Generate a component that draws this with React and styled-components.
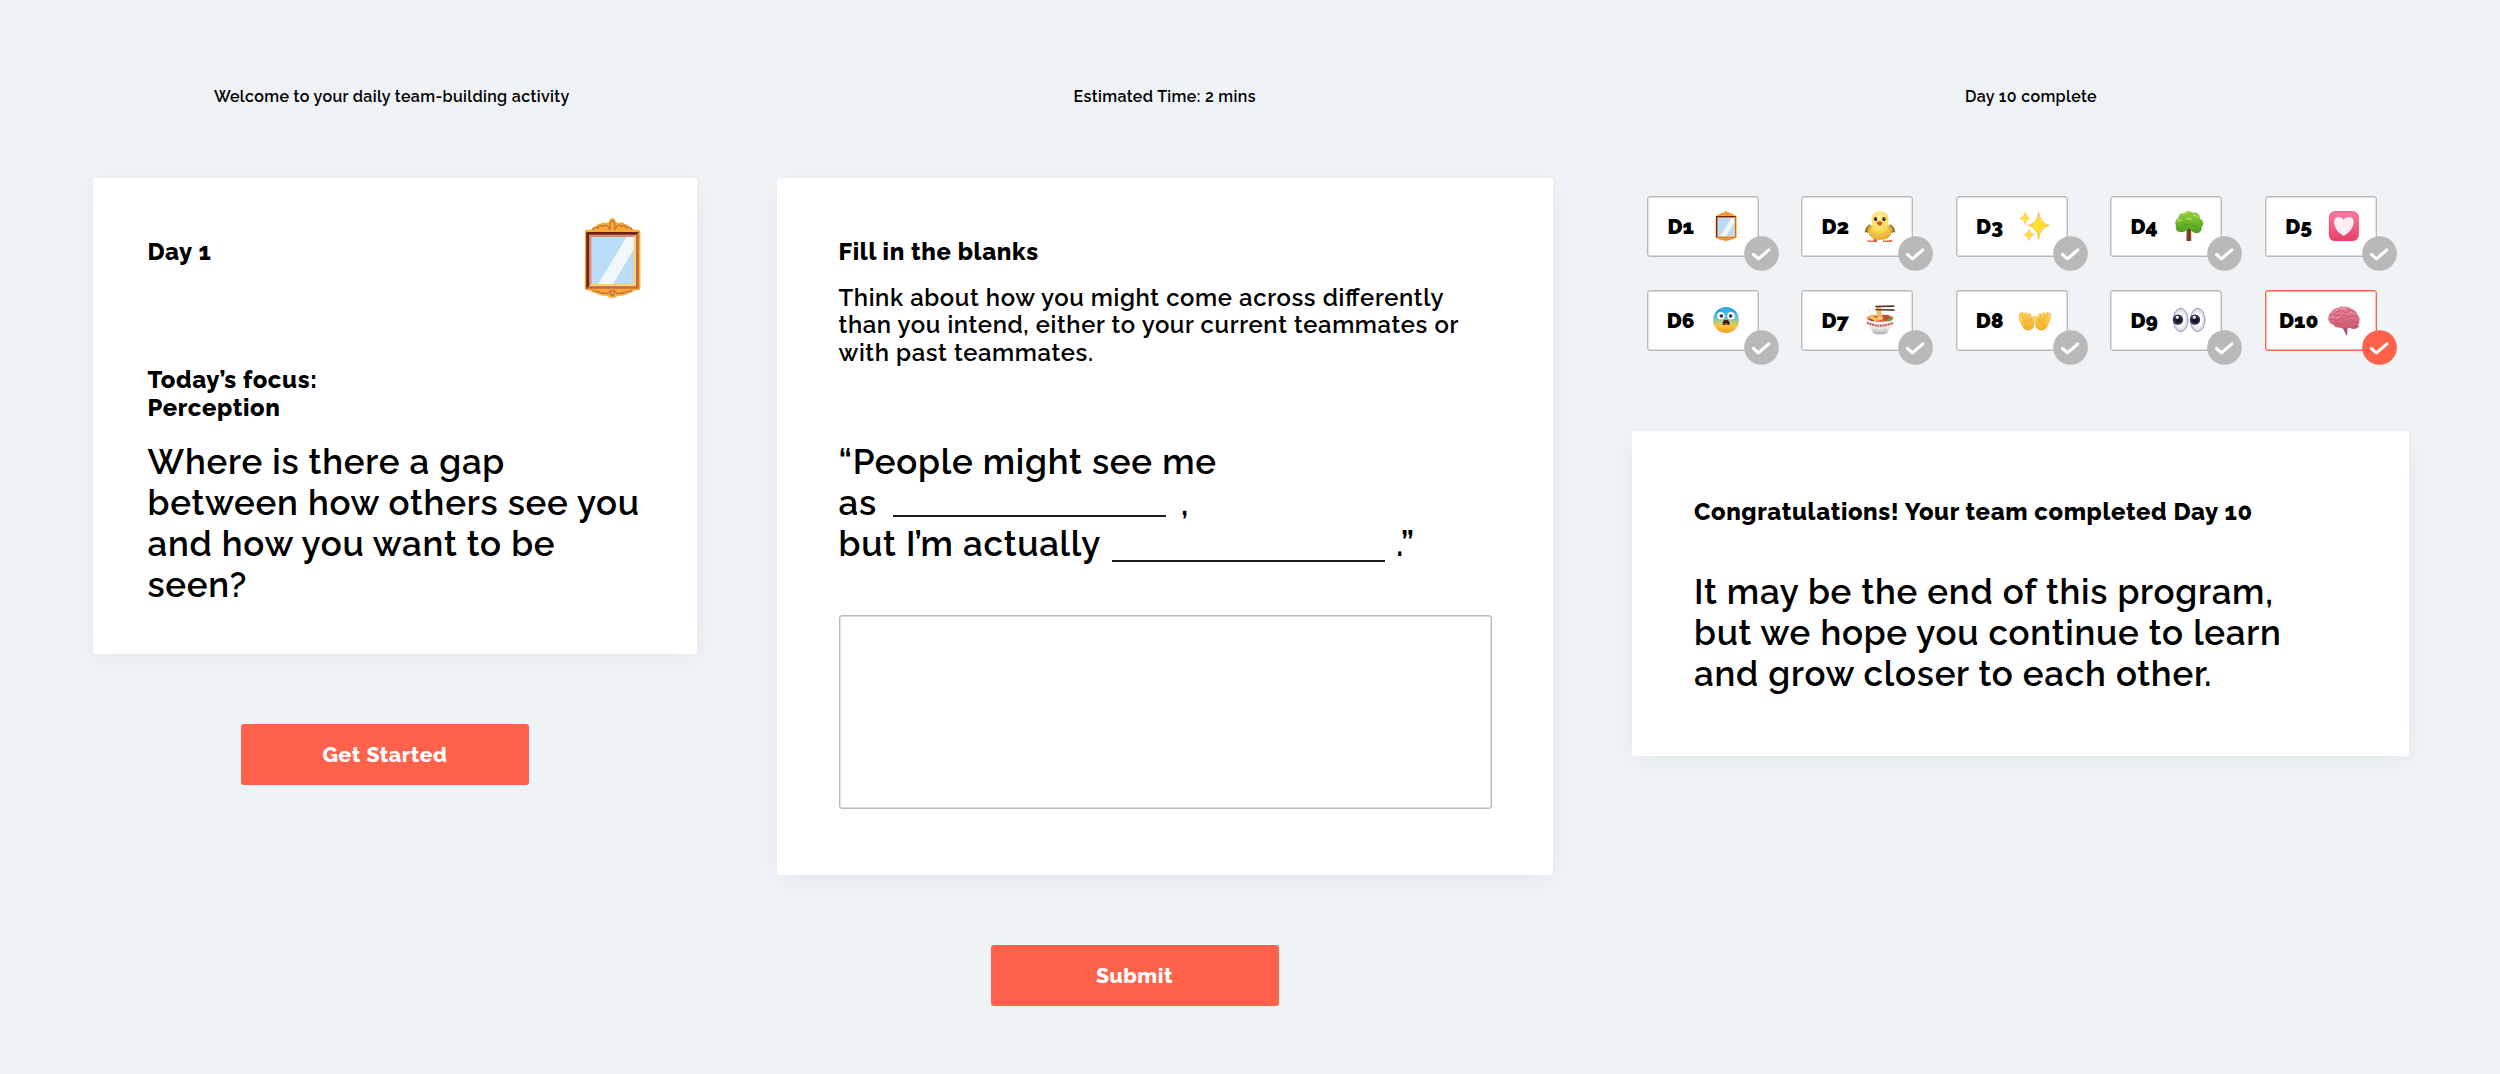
import React from 'react';
import styled, { createGlobalStyle } from 'styled-components';

const CORAL = '#ff614b';
const GREY = '#b9b9b9';

const GlobalStyle = createGlobalStyle`
  * { box-sizing: border-box; }
  body {
    margin: 0;
    background: #eff3f6;
    color: #000;
    font-family: Raleway, Lato, sans-serif;
    font-feature-settings: "liga" 1;
    font-weight: 600;
  }
  h1, h2, p { margin: 0; }
`;

const Board = styled.main`
  display: flex;
  align-items: flex-start;
  width: 2500px;
  height: 1074px;
  padding: 87px 91px 0 92.5px;
  overflow: hidden;
`;

const Column = styled.section`
  display: flex;
  flex-direction: column;
  width: ${p => p.$width}px;
  margin-right: ${p => p.$gap || 0}px;
`;

const Caption = styled.p`
  height: 19px;
  margin-bottom: 72px;
  padding-left: ${p => p.$shift || 0}px;
  padding-right: ${p => p.$pull || 0}px;
  font-size: 16px;
  line-height: 19px;
  letter-spacing: 0.36px;
  text-align: center;
`;

const Card = styled.article`
  display: flex;
  flex-direction: column;
  height: ${p => p.$height}px;
  padding: ${p => p.$pad};
  background: #fff;
  border-radius: 3px;
  box-shadow: 0 6px 26px rgba(20, 40, 50, 0.05);
`;

const CardTop = styled.header`
  display: flex;
  justify-content: space-between;
  height: 149px;
  padding-right: 55px;
`;

const Heading = styled.h2`
  font-size: 23.85px;
  line-height: 28px;
  font-weight: 800;
  letter-spacing: 0.63px;
  padding-top: ${p => p.$top || 0}px;
`;

const Body = styled.p`
  font-size: 23.85px;
  line-height: 27.9px;
  letter-spacing: 0.63px;
  margin-top: 18.5px;
`;

const Statement = styled.p`
  font-size: 34.9px;
  line-height: 41px;
  letter-spacing: 0.73px;
  margin-top: ${p => p.$top}px;
`;

const Blank = styled.span`
  display: inline-block;
  width: 273px;
  height: 2px;
  background: #1c1c1c;
  margin: 0 ${p => p.$after}px 0 ${p => p.$before}px;
  vertical-align: ${p => p.$drop}px;
`;

const Answer = styled.textarea`
  display: block;
  width: 653px;
  height: 194px;
  margin-top: 51px;
  border: 1px solid ${GREY};
  border-radius: 3px;
  box-shadow: inset 0 0 0 0.4px ${GREY};
  background: #fff;
  resize: none;
  outline: none;
`;

const Button = styled.button`
  width: 288px;
  height: 61px;
  margin: 70px 0 0 ${p => p.$left}px;
  padding: 0;
  border: 0;
  border-radius: 3px;
  background: ${CORAL};
  color: #fff;
  font-family: inherit;
  font-size: 21.2px;
  font-weight: 800;
  letter-spacing: 0.55px;
`;

const Days = styled.div`
  display: grid;
  grid-template-columns: repeat(5, 112px);
  column-gap: 42.5px;
  row-gap: 33px;
  padding: 17.5px 0 0 14.7px;
  height: 253px;
  align-content: start;
`;

const Day = styled.div`
  position: relative;
  display: flex;
  align-items: center;
  width: 112px;
  height: 61px;
  padding-left: 5px;
  background: #fff;
  border: 1px solid ${p => (p.$active ? CORAL : GREY)};
  border-radius: 3px;
  box-shadow: inset 0 0 0 0.4px ${p => (p.$active ? CORAL : GREY)};
`;

const DayLabel = styled.span`
  width: 56px;
  font-size: 21px;
  font-weight: 900;
  text-align: center;
`;

const Badge = styled.svg`
  position: absolute;
  left: 96.2px;
  top: 39.2px;
  width: 35px;
  height: 35px;
`;

const Glyph = styled.svg`
  flex: none;
  width: ${p => p.$w || 34}px;
  height: ${p => p.$h || 34}px;
`;

function MirrorArt() {
  return (
    <>
      <path d="M46 62 Q46 58 54 58 L64 58 Q68 50 78 50 Q80 41 92 40 Q100 34 110 38 Q116 37 118 34 Q120 23 128 23 Q136 23 138 34 Q141 38 148 37 Q158 34 164 40 Q176 41 178 50 Q188 50 192 58 L205 58 Q212 58 212 64 L212 232 Q212 240 205 240 L192 241 Q186 248 178 247 Q174 254 164 253 Q154 258 144 256 Q138 263 128 263 Q118 263 112 256 Q102 258 92 253 Q82 254 78 247 Q68 248 64 241 L54 240 Q45 240 45 232 Z" fill="#fbab2f" />
      <path d="M70 57 Q76 47 86 53 Q90 42 101 48 Q111 38 119 55 M186 57 Q180 47 170 53 Q166 42 155 48 Q145 38 137 55 M122 57 Q118 34 128 31 Q138 34 134 57 M70 240 Q78 247 86 242 Q92 252 102 247 Q112 254 119 244 M186 240 Q178 247 170 242 Q164 252 154 247 Q144 254 137 244 M122 242 Q128 239 134 242 L132 254 L124 254 Z" fill="none" stroke="#c0714a" strokeWidth="4" strokeLinecap="round" />
      <path d="M50 65 H207 V235 H50 Z" fill="#bd6a48" />
      <path d="M50 65 H207 L199 73 H58 V226 L50 235 Z" fill="#6b2019" />
      <path d="M58 73 H199 V226 H58 Z" fill="#d98a6c" />
      <path d="M199 73 V228 H58 L65 220 H191 V80 Z" fill="#ffd166" />
      <path d="M65 80 H192 V221 H65 Z" fill="#bbdcf6" />
      <path d="M171 80 H192 V118 L130 221 H85 Z" fill="#f2f7fb" />
    </>
  );
}

function ChickArt() {
  return (
    <>
      <path d="M734 176 L731 182 L715 181 L714 185 L744 186 L743 176 M761 176 L764 182 L789 180 L788 185 L761 186 Z" fill="#ee5b3a" />
      <path d="M723 132 Q708 139 706 158 L712 155 L714 160 L724 152 Z M781 132 Q796 139 798 158 L792 155 L790 160 L780 152 Z" fill="#8d6a2a" />
      <path d="M752 93 Q776 94 778 118 Q777 127 774 132 Q788 140 788 154 Q784 179 752 180 Q720 179 716 154 Q716 140 730 132 Q726 127 726 118 Q728 94 752 93 Z" fill="url(#chick)" />
      <path d="M722 137 Q713 143 713 153 Q724 154 730 139 Z M782 137 Q791 143 791 153 Q780 154 774 139 Z" fill="#e9ae2f" />
      <ellipse cx="739" cy="117" rx="5" ry="6" fill="#1d1c35" /><ellipse cx="764" cy="117" rx="5" ry="6" fill="#1d1c35" />
      <circle cx="740.500" cy="115" r="1.500" fill="#fff" /><circle cx="765.500" cy="115" r="1.500" fill="#fff" />
      <path d="M742 127 Q751 119 760 127 Q756 136 751 137 Q745 135 742 127 Z" fill="#f2762c" />
      <path d="M742 127 Q751 130 760 127 Q756 136 751 137 Q745 135 742 127 Z" fill="#c94a20" />
      <defs><radialGradient id="chick" cx=".45" cy=".25" r=".8"><stop offset="0" stopColor="#fff0a0" /><stop offset=".55" stopColor="#fbd954" /><stop offset="1" stopColor="#e2a029" /></radialGradient></defs>
    </>
  );
}

function SparklesArt() {
  return (
    <g fill="url(#spark)" stroke="#f5b64e" strokeWidth="1.500" strokeLinejoin="round">
      <path d="M297 95 Q301 130 330 136 Q301 144 297 179 Q293 144 264 136 Q293 130 297 95 Z" />
      <path d="M257 95 Q259 112 272 115 Q259 118 257 134 Q254 118 240 115 Q254 112 257 95 Z" />
      <path d="M268 147 Q270 161 284 164 Q270 167 268 182 Q265 167 253 164 Q265 161 268 147 Z" />
      <defs><radialGradient id="spark"><stop offset="0" stopColor="#ffe817" /><stop offset=".5" stopColor="#ffd83a" /><stop offset="1" stopColor="#f8b95c" /></radialGradient></defs>
    </g>
  );
}

function TreeArt() {
  return (
    <>
      <path d="M742 142 H755 L756 181 Q757 184 753 183 L743 183 Q740 183 741 180 Z" fill="#8a4a26" />
      <path d="M749 145 L750 183" stroke="#5a2d18" strokeWidth="3" />
      <g fill="url(#leaf)">
        <circle cx="748" cy="109" r="16" /><circle cx="732" cy="114" r="15" /><circle cx="766" cy="113" r="16" />
        <circle cx="721" cy="128" r="13" /><circle cx="778" cy="130" r="14" /><circle cx="749" cy="128" r="18" />
        <circle cx="723" cy="142" r="14" /><circle cx="772" cy="145" r="15" />
        <path d="M716 132 Q748 118 783 134 L776 158 Q762 160 756 152 L748 142 L740 152 Q728 160 716 151 Z" />
      </g>
      <path d="M731 104 Q739 97 748 98 M763 106 Q770 105 775 111 M716 124 Q720 119 726 121 M742 117 Q750 113 756 118" fill="none" stroke="#a5dd4a" strokeWidth="5" strokeLinecap="round" />
      <path d="M733 131 Q740 137 748 133 M758 135 Q764 141 772 139" fill="none" stroke="#4a961e" strokeWidth="2.500" strokeLinecap="round" />
      <defs><linearGradient id="leaf" gradientUnits="userSpaceOnUse" x1="748" y1="93" x2="748" y2="160"><stop offset="0" stopColor="#93d338" /><stop offset="1" stopColor="#4c9a20" /></linearGradient></defs>
    </>
  );
}

function HeartArt() {
  return (
    <>
      <rect x="388" y="94" width="89" height="89" rx="18" fill="url(#pink)" />
      <rect x="389" y="95" width="87" height="87" rx="17" fill="none" stroke="#e64a75" strokeWidth="2" />
      <path d="M432 120 Q428 111 417 111 Q403 112 403 128 Q404 151 432 168 Q460 151 462 128 Q462 112 448 111 Q436 111 432 120 Z" fill="#fdeef3" />
      <defs><linearGradient id="pink" x1="0" y1="0" x2="0" y2="1"><stop offset="0" stopColor="#ff7ba0" /><stop offset="1" stopColor="#e83e6c" /></linearGradient></defs>
    </>
  );
}

function FearArt() {
  return (
    <>
      <circle cx="288" cy="419" r="39" fill="url(#fear)" />
      <path d="M260 396 Q267 393 270 387 M316 396 Q309 393 306 387" fill="none" stroke="#1680b8" strokeWidth="3" strokeLinecap="round" />
      <circle cx="273" cy="406" r="11" fill="#fff" /><circle cx="303" cy="406" r="11" fill="#fff" />
      <circle cx="274" cy="407" r="5.500" fill="#34303c" /><circle cx="302" cy="407" r="5.500" fill="#34303c" />
      <path d="M278 430 Q278 418 288 418 Q298 418 299 430 Q299 435 294 434 L283 434 Q278 435 278 430 Z" fill="#3c1d20" />
      <path d="M282 432 Q288 426 295 432 Q288 435 282 432 Z" fill="#f05a6c" />
      <defs><linearGradient id="fear" x1="0" y1="0" x2="0" y2="1"><stop offset="0" stopColor="#1fa9f6" /><stop offset=".35" stopColor="#55c0e2" /><stop offset=".6" stopColor="#c6c976" /><stop offset=".75" stopColor="#fdc237" /><stop offset="1" stopColor="#fb9526" /></linearGradient></defs>
    </>
  );
}

function RamenArt() {
  return (
    <>
      <path d="M722 399 Q716 391 723 384 M733 396 Q728 387 734 381" fill="none" stroke="#d7edf6" strokeWidth="3" strokeLinecap="round" />
      <path d="M709 410 Q712 438 727 448 L731 459 Q753 466 773 459 L778 448 Q794 437 796 410 Z" fill="url(#bowl)" />
      <ellipse cx="752.500" cy="412" rx="44.500" ry="13" fill="#f1efed" />
      <ellipse cx="752.500" cy="414" rx="39" ry="10.500" fill="#c7622d" />
      <path d="M717 413 Q720 404 734 404 L750 405 L757 417 Q745 425 730 421 Z" fill="#f9b84b" />
      <path d="M720 417 L733 421 M735 407 L746 412" stroke="#5b3528" strokeWidth="3" />
      <ellipse cx="769" cy="411" rx="13" ry="7" fill="#c64735" />
      <path d="M774 419 Q781 409 791 413 Q787 422 775 423 Z" fill="#58a738" />
      <path d="M739 377 H756 L757 403 L762 416 Q751 421 745 415 L742 407 Z" fill="#f6cb7c" />
      <path d="M744 379 L747 412 M751 379 L753 414" stroke="#d99743" strokeWidth="2" fill="none" />
      <path d="M738 376 L795 375 L795 380 L738 381 Z M738 386 L795 387 L795 392 L738 390 Z" fill="#5a302e" />
      <path d="M713 427 Q752 445 792 427" fill="none" stroke="#c75455" strokeWidth="6" strokeDasharray="6 2" />
      <path d="M727 446 Q752 455 778 446" fill="none" stroke="#c9c7c9" strokeWidth="2" />
      <defs><linearGradient id="bowl" x1="0" y1="0" x2="0" y2="1"><stop offset="0" stopColor="#f8f7f5" /><stop offset=".7" stopColor="#e5e3e3" /><stop offset="1" stopColor="#aaa8ab" /></linearGradient></defs>
    </>
  );
}

function Hand() {
  return (
    <>
      <path d="M238 408 Q237 396 242 398 L245 402 Q245 393 250 396 L256 402 Q257 394 261 397 L267 404 Q269 397 273 401 L277 414 Q280 407 285 408 Q287 411 284 418 L283 434 Q282 447 267 450 Q254 450 248 437 Q239 424 238 408 Z" fill="url(#palm)" stroke="#e39a22" strokeWidth="1.200" />
      <path d="M246 402 L257 424 M256 402 L264 421 M267 404 L270 419 M277 414 Q277 421 271 424 M258 440 Q257 427 269 424" fill="none" stroke="#e49b24" strokeWidth="2" strokeLinecap="round" />
      <path d="M280 413 Q286 406 288 413 L286 432 Z" fill="#f8d98f" />
    </>
  );
}

function HandsArt() {
  return (
    <>
      <Hand />
      <g transform="translate(571 0) scale(-1 1)"><Hand /></g>
      <defs><linearGradient id="palm" x1="0" y1="0" x2="0" y2="1"><stop offset="0" stopColor="#ffdd63" /><stop offset="1" stopColor="#f9ab24" /></linearGradient></defs>
    </>
  );
}

function EyesArt() {
  return (
    <>
      {[723, 774].map(x => (
        <g key={x}>
          <ellipse cx={x + 1} cy="419" rx="22" ry="35" fill="url(#eye)" stroke="#8f8ba8" strokeWidth="2.500" />
          <circle cx={x - 7} cy="418" r="15.500" fill="#2b3150" />
          <circle cx={x - 6} cy="419" r="9" fill="#11142b" />
          <ellipse cx={x - 9} cy="411" rx="4.500" ry="5" fill="#fff" />
        </g>
      ))}
      <defs><radialGradient id="eye"><stop offset=".5" stopColor="#fff" /><stop offset="1" stopColor="#cfcddd" /></radialGradient></defs>
    </>
  );
}

function BrainArt() {
  return (
    <>
      <path d="M428 441 L444 441 L442 464 Q438 467 437 459 Z" fill="#b24d62" />
      <ellipse cx="462" cy="437" rx="15" ry="9" fill="#c2566b" />
      <path d="M386 416 Q385 401 395 395 Q400 384 413 383 Q424 376 437 379 Q450 378 458 387 Q470 391 473 402 Q482 411 479 424 Q478 436 464 438 Q452 446 440 442 Q428 447 418 441 Q406 444 402 433 Q388 430 386 416 Z" fill="url(#brain)" />
      <path d="M393 404 Q399 397 406 403 Q412 409 419 403 M405 391 Q411 398 419 393 Q425 386 432 393 Q438 401 445 394 M443 383 Q444 389 451 390 Q460 388 464 397 M388 418 Q395 411 402 417 Q409 424 416 417 Q423 410 430 417 M427 406 Q435 402 440 409 Q447 417 454 409 Q460 402 471 408 M401 431 Q407 424 414 430 Q421 436 428 429 Q434 423 441 429 Q447 436 453 428 Q460 422 477 427 M444 422 Q451 416 459 419" fill="none" stroke="#b94e68" strokeWidth="2.300" strokeLinecap="round" />
      <path d="M397 400 Q404 391 412 389 M422 385 Q431 380 440 385 M452 394 Q461 395 465 402 M391 413 Q397 407 403 411 M410 415 Q416 411 421 408" fill="none" stroke="#f4a0ae" strokeWidth="2.500" strokeLinecap="round" />
      <defs><linearGradient id="brain" x1="0" y1="0" x2="0" y2="1"><stop offset="0" stopColor="#ec8597" /><stop offset="1" stopColor="#cf5b74" /></linearGradient></defs>
    </>
  );
}

const days = [
  { name: 'D1', Art: MirrorArt, box: '-6 9 268 268' },
  { name: 'D2', Art: ChickArt, box: '701 87 102 102' },
  { name: 'D3', Art: SparklesArt, box: '235 87 102 102' },
  { name: 'D4', Art: TreeArt, box: '698 87 102 102' },
  { name: 'D5', Art: HeartArt, box: '382 87 102 102' },
  { name: 'D6', Art: FearArt, box: '237 368 102 102' },
  { name: 'D7', Art: RamenArt, box: '701 368 102 102' },
  { name: 'D8', Art: HandsArt, box: '235 368 102 102' },
  { name: 'D9', Art: EyesArt, box: '698 368 102 102' },
  { name: 'D10', Art: BrainArt, box: '382 368 102 102', active: true },
];

function DayChip({ name, Art, box, active }) {
  return (
    <Day $active={active}>
      <DayLabel>{name}</DayLabel>
      <Glyph viewBox={box}><Art /></Glyph>
      <Badge viewBox="-52.500 -52.500 105 105">
        <circle r="52" fill={active ? CORAL : GREY} />
        <path d="M-24 3 L-9 16 L22 -11" fill="none" stroke="#fff" strokeWidth="9.500" strokeLinecap="round" strokeLinejoin="round" />
      </Badge>
    </Day>
  );
}

export default function App() {
  return (
    <>
      <GlobalStyle />
      <Board>
        <Column $width={604.5} $gap={79.5}>
          <Caption $pull={6}>Welcome to your daily team-building activity</Caption>
          <Card $height={476} $pad="39px 0 0 55px">
            <CardTop>
              <Heading $top={21}>Day 1</Heading>
              <Glyph viewBox="40 20 176 246" $w={58.7} $h={82}><MirrorArt /></Glyph>
            </CardTop>
            <Heading>Today’s focus:<br />Perception</Heading>
            <Statement $top={19}>
              Where is there a gap<br />between how others see you<br />and how you want to be<br />seen?
            </Statement>
          </Card>
          <Button $left={148.5}>Get Started</Button>
        </Column>

        <Column $width={776.5} $gap={79}>
          <Caption>Estimated Time: 2 mins</Caption>
          <Card $height={696.5} $pad="60px 0 0 62px">
            <Heading>Fill in the blanks</Heading>
            <Body>
              Think about how you might come across differently<br />
              than you intend, either to your current teammates or<br />
              with past teammates.
            </Body>
            <Statement $top={73}>
              “People might see me<br />
              as<Blank $before={16} $after={15} $drop={-2} />,<br />
              but I’m actually<Blank $before={11} $after={11} $drop={-6} />.”
            </Statement>
            <Answer />
          </Card>
          <Button $left={214}>Submit</Button>
        </Column>

        <Column $width={777}>
          <Caption $shift={21}>Day 10 complete</Caption>
          <Days>
            {days.map(d => <DayChip key={d.name} {...d} />)}
          </Days>
          <Card $height={325} $pad="67px 0 0 62px">
            <Heading>Congratulations! Your team completed Day 10</Heading>
            <Statement $top={45}>
              It may be the end of this program,<br />but we hope you continue to learn<br />and grow closer to each other.
            </Statement>
          </Card>
        </Column>
      </Board>
    </>
  );
}
